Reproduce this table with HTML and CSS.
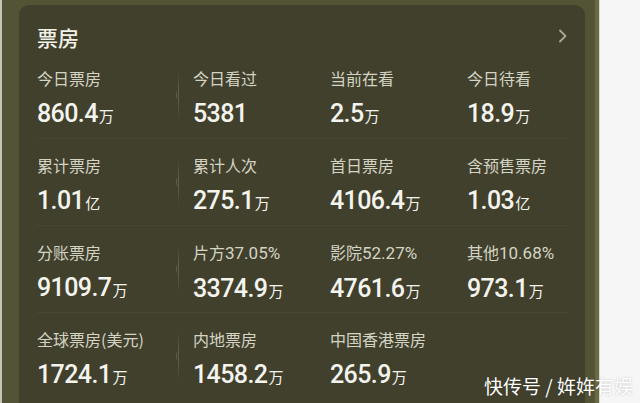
FILE: index.html
```html
<!DOCTYPE html>
<html lang="zh">
<head>
<meta charset="utf-8">
<link rel="stylesheet" href="styles.css">
</head>
<body>
<div class="page">
  <div class="screen">
    <div class="card">
      <div class="head">
        <div class="title">票房</div>
        <svg class="chev" width="10" height="14" viewBox="0 0 10 14"><polyline points="2,1.5 7.5,7 2,12.5" fill="none" stroke="#a9a99a" stroke-width="1.8" stroke-linecap="round" stroke-linejoin="round"/></svg>
      </div>
      <div class="row">
        <div class="cell"><div class="lbl">今日票房</div><div class="val">860.4<span class="u">万</span></div></div>
        <div class="cell div"><div class="lbl">今日看过</div><div class="val">5381</div></div>
        <div class="cell"><div class="lbl">当前在看</div><div class="val">2.5<span class="u">万</span></div></div>
        <div class="cell"><div class="lbl">今日待看</div><div class="val">18.9<span class="u">万</span></div></div>
      </div>
      <div class="row">
        <div class="cell"><div class="lbl">累计票房</div><div class="val">1.01<span class="u">亿</span></div></div>
        <div class="cell div"><div class="lbl">累计人次</div><div class="val">275.1<span class="u">万</span></div></div>
        <div class="cell"><div class="lbl">首日票房</div><div class="val">4106.4<span class="u">万</span></div></div>
        <div class="cell"><div class="lbl">含预售票房</div><div class="val">1.03<span class="u">亿</span></div></div>
      </div>
      <div class="row">
        <div class="cell"><div class="lbl">分账票房</div><div class="val">9109.7<span class="u">万</span></div></div>
        <div class="cell div"><div class="lbl">片方<span class="pct">37.05%</span></div><div class="val">3374.9<span class="u">万</span></div></div>
        <div class="cell"><div class="lbl">影院<span class="pct">52.27%</span></div><div class="val">4761.6<span class="u">万</span></div></div>
        <div class="cell"><div class="lbl">其他<span class="pct">10.68%</span></div><div class="val">973.1<span class="u">万</span></div></div>
      </div>
      <div class="row">
        <div class="cell"><div class="lbl">全球票房(美元)</div><div class="val">1724.1<span class="u">万</span></div></div>
        <div class="cell div"><div class="lbl">内地票房</div><div class="val">1458.2<span class="u">万</span></div></div>
        <div class="cell"><div class="lbl">中国香港票房</div><div class="val">265.9<span class="u">万</span></div></div>
        <div class="cell"></div>
      </div>
    </div>
  </div>
  <div class="side"></div>
  <div class="mark">快传号 / 姩姩有娱</div>
</div>
</body>
</html>
```

FILE: styles.css
```css
html, body {
  margin: 0;
  padding: 0;
}
body {
  width: 640px;
  height: 403px;
  overflow: hidden;
  background: #f6f6f6;
  font-family: "Noto Sans CJK SC", "Noto Sans", sans-serif;
}
.page {
  position: relative;
  display: flex;
  width: 640px;
  height: 403px;
}
.screen {
  width: 595px;
  height: 403px;
  box-sizing: border-box;
  background: #535336;
  border-left: 2px solid #c4c4b8;
  padding: 5px 10px 0 17px;
  overflow: hidden;
}
.side {
  width: 4px;
  height: 403px;
  background: #6b6b42;
  border-right: 1px solid #d8d8d0;
}
.card {
  height: 420px;
  background: #41402d;
  border-radius: 10px;
  padding: 19px 0 0 18px;
  box-sizing: border-box;
}
.head {
  display: flex;
  align-items: center;
  justify-content: space-between;
  height: 27px;
  padding-right: 17px;
}
.title {
  font-size: 21px;
  line-height: 27px;
  color: #f1f1e8;
  font-weight: 500;
}
.chev {
  margin-top: -3px;
}
.row {
  display: grid;
  grid-template-columns: 156px 137px 137px 1fr;
  height: 87px;
  box-sizing: border-box;
  padding-top: 17px;
  margin-right: 17px;
  border-top: 1px solid rgba(255, 255, 255, 0.04);
}
.head + .row {
  border-top-color: transparent;
}
.cell {
  position: relative;
}
.div::before {
  content: "";
  position: absolute;
  left: -15px;
  top: 2px;
  width: 1px;
  height: 48px;
  background: linear-gradient(to bottom, rgba(200, 200, 170, 0), rgba(200, 200, 170, 0.22) 40%, rgba(200, 200, 170, 0.22) 60%, rgba(200, 200, 170, 0));
}
.div::after {
  content: "";
  position: absolute;
  left: -17px;
  top: 22px;
  width: 2px;
  height: 8px;
  border-left: 1px solid rgba(200, 200, 170, 0.2);
  border-radius: 2px 0 0 2px;
}
.lbl {
  font-size: 16px;
  line-height: 18px;
  color: #d4d4c4;
  white-space: nowrap;
}
.pct {
  font-family: Roboto, "Noto Sans", sans-serif;
  font-size: 17px;
}
.val {
  margin-top: 13px;
  font-family: Roboto, "Noto Sans", sans-serif;
  font-size: 25px;
  line-height: 28px;
  font-weight: 500;
  letter-spacing: -0.6px;
  color: #f4f4ee;
  white-space: nowrap;
}
.u {
  font-family: "Noto Sans CJK SC", sans-serif;
  font-size: 15px;
  font-weight: 400;
  letter-spacing: 0;
  margin-left: 1px;
}
.mark {
  position: absolute;
  left: 484px;
  top: 374px;
  font-size: 19px;
  line-height: 24px;
  color: #ffffff;
  white-space: nowrap;
  text-shadow: 0 0 2px rgba(0, 0, 0, 0.25);
}
```
